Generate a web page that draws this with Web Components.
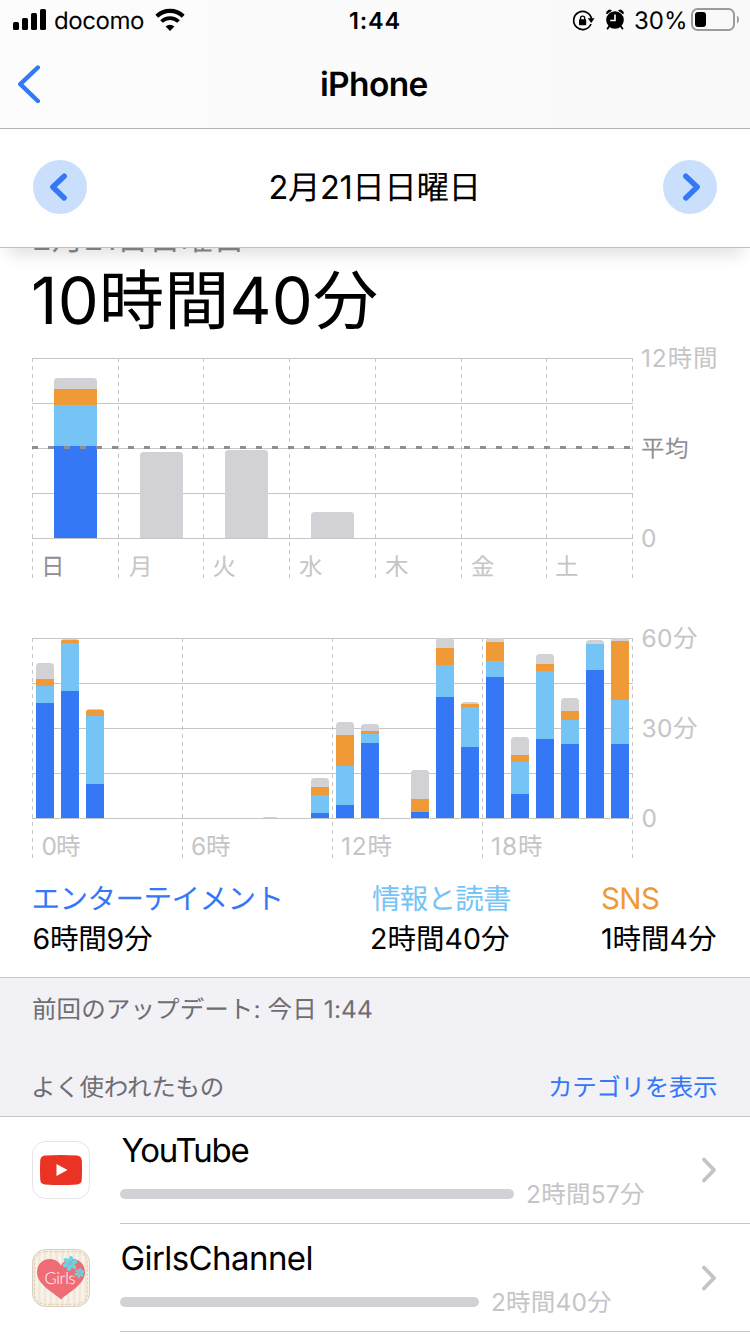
<!DOCTYPE html>
<html lang="ja">
<head>
<meta charset="utf-8">
<title>iPhone</title>
<style>
body {
  margin: 0;
  width: 750px;
  height: 1334px;
  overflow: hidden;
  background: #fff;
  color: #000;
  font-family: Inter, "Noto Sans CJK JP", sans-serif;
  text-rendering: geometricPrecision;
}
</style>
</head>
<body>
<screen-time></screen-time>

<script>
const FONT = 'Inter, "Noto Sans CJK JP", sans-serif';
const COLORS = { blue: '#3478f6', light: '#76c4f5', orange: '#f09a37', grey: '#d1d1d6' };
const ctx = document.createElement('canvas').getContext('2d');

// One line of text, tracked so that its glyphs span exactly `w` pixels
class FitText extends HTMLElement {
  constructor() {
    super();
    this.attachShadow({ mode: 'open' }).innerHTML = `
<style>
:host {
  display: block;
  flex: none;
  white-space: nowrap;
}
span {
  display: block;
}
</style>
<span><slot></slot></span>`;
  }

  connectedCallback() {
    const size = Number(this.getAttribute('size'));
    const weight = this.getAttribute('weight') || 400;
    const w = Number(this.getAttribute('w'));
    const text = this.textContent;
    ctx.font = `${weight} ${size}px ${FONT}`;
    const m = ctx.measureText(text);
    const ink = m.actualBoundingBoxLeft + m.actualBoundingBoxRight;
    this.style.width = w + 'px';
    this.style.height = '40px';
    const span = this.shadowRoot.querySelector('span');
    span.style.font = `${weight} ${size}px/40px ${FONT}`;
    span.style.marginLeft = m.actualBoundingBoxLeft + 'px';
    if (text.length > 1) {
      span.style.letterSpacing = (w - ink) / (text.length - 1) + 'px';
    }
  }
}
customElements.define('fit-text', FitText);


class StatusBar extends HTMLElement {
  constructor() {
    super();
    this.attachShadow({ mode: 'open' }).innerHTML = `
<style>
:host {
  display: grid;
  grid-template-columns: 350px 1fr auto;
  height: 41px;
  align-items: center;
}
.group {
  display: flex;
  align-items: center;
}
svg {
  display: block;
  flex: none;
}
.left {
  padding-left: 13px;
}
.left fit-text {
  margin: 0 11px 0 9px;
}
.right fit-text {
  margin: 0 6px 0 11px;
}
.right {
  padding-right: 10px;
}
</style>
<div class="group left">
  <svg width="33" height="41" viewBox="13 0 33 41">
    <rect x="13" y="22" width="6" height="8" rx="1.6"/>
    <rect x="22" y="18" width="6" height="12" rx="1.6"/>
    <rect x="31" y="13" width="6" height="17" rx="1.6"/>
    <rect x="40" y="9" width="6" height="21" rx="1.6"/>
  </svg>
  <fit-text size="24" w="89">docomo</fit-text>
  <svg width="30" height="41" viewBox="154.500 0 30 41" fill="none" stroke="#000">
    <path d="M156.300 16.200a19 19 0 0 1 26.400 0" stroke-width="4.100"/>
    <path d="M161 21.500a12.200 12.200 0 0 1 17 0" stroke-width="3.800"/>
    <path d="M169.500 31l-4.400-4.500a6.300 6.300 0 0 1 8.800 0z" fill="#000" stroke="none"/>
  </svg>
</div>
<fit-text size="23.500" weight="600" w="49.500">1:44</fit-text>
<div class="group right">
  <svg width="52" height="41" viewBox="572 0 52 41">
    <path d="M591.600 19.200a9 9 0 1 0-.6 4.800" fill="none" stroke="#000" stroke-width="1.700"/>
    <path d="M587.800 18.200h6.800l-3.400 4.800z"/>
    <rect x="579" y="19.300" width="7.200" height="5.900" rx=".8"/>
    <path d="M580.500 20v-1.800a2.100 2.100 0 0 1 4.200 0v1.800" fill="none" stroke="#000" stroke-width="1.300"/>
    <circle cx="615" cy="20" r="8.800"/>
    <path d="M606.800 13.800a3 3 0 0 1 4.600-3.200zM623.200 13.800a3 3 0 0 0-4.600-3.200z" stroke="#000" stroke-width="1" stroke-linejoin="round"/>
    <path d="M609.500 26l-2 2.600M620.500 26l2 2.600" stroke="#000" stroke-width="1.800" stroke-linecap="round"/>
    <path d="M615 14.500v6h-4.800" fill="none" stroke="#fff" stroke-width="1.600"/>
  </svg>
  <fit-text size="24" w="50">30%</fit-text>
  <svg width="49" height="41" viewBox="691 0 49 41">
    <rect x="692" y="9" width="42" height="21" rx="5.500" fill="none" stroke="#9b9b9c" stroke-width="2"/>
    <rect x="695" y="12" width="11" height="15" rx="3"/>
    <path d="M737 15.500c2.600 1.200 2.600 6.800 0 8z" fill="#9b9b9c"/>
  </svg>
</div>`;
  }
}
customElements.define('status-bar', StatusBar);


class NavBar extends HTMLElement {
  constructor() {
    super();
    this.attachShadow({ mode: 'open' }).innerHTML = `
<style>
:host {
  display: flex;
  height: 87px;
  align-items: center;
  border-bottom: 1px solid #b4b4b6;
}
svg {
  display: block;
  margin-right: 281px;
}
</style>
<svg width="40" height="87" viewBox="0 41 40 87">
  <path d="M37.800 67.500L20.300 84.200l17.500 16.800" fill="none" stroke="#3478f6" stroke-width="4.400" stroke-linecap="round" stroke-linejoin="round"/>
</svg>
<fit-text size="33.500" weight="600" w="106.500"></fit-text>`;
  }

  connectedCallback() {
    // fit-text measures its own text
    const title = this.shadowRoot.querySelector('fit-text');
    title.textContent = this.getAttribute('heading');
    title.connectedCallback();
  }
}
customElements.define('nav-bar', NavBar);


class RoundButton extends HTMLElement {
  constructor() {
    super();
    this.attachShadow({ mode: 'open' }).innerHTML = `
<style>
:host {
  display: block;
  width: 54px;
  height: 54px;
  border-radius: 50%;
  background: #cadffc;
}
:host([next]) svg {
  transform: scaleX(-1);
}
svg {
  display: block;
}
</style>
<svg width="54" height="54" viewBox="0 0 54 54">
  <path d="M31.200 16.200L19.800 27l11.400 11" fill="none" stroke="#3478f6" stroke-width="5.400" stroke-linecap="round" stroke-linejoin="round"/>
</svg>`;
  }
}
customElements.define('round-button', RoundButton);


class DateBar extends HTMLElement {
  constructor() {
    super();
    this.attachShadow({ mode: 'open' }).innerHTML = `
<style>
:host {
  display: flex;
  align-items: center;
  justify-content: space-between;
  box-sizing: border-box;
  height: 119px;
  padding: 0 33px 2px;
  background: #fefefe;
  border-bottom: 1px solid #bfbfc1;
}
fit-text {
  padding: 2px 3px 0 0;
}
</style>
<round-button></round-button>
<fit-text size="32.500" w="206">2月21日日曜日</fit-text>
<round-button next></round-button>`;
  }
}
customElements.define('date-bar', DateBar);


class BarChart extends HTMLElement {
  constructor() {
    super();
    this.attachShadow({ mode: 'open' });
  }

  // bars: x, bottom-up heights [blue, light, orange, grey]
  set data({ lines, bars, barWidth, average, xLabels, yLabels }) {
    const keys = ['blue', 'light', 'orange', 'grey'];
    let svg = '';
    for (let y = 0; y <= 180; y += 45) {
      svg += `<rect x="32" y="${y + 10}" width="601" height="1" fill="#c6c6c8"/>`;
    }
    for (const x of lines) {
      svg += `<path d="M${x + 0.5} 10V230" stroke="#c6c6c8" stroke-dasharray="4 4"/>`;
    }
    bars.forEach(([x, parts, width = barWidth], i) => {
      const total = parts.reduce((a, b) => a + b, 0);
      const r = Math.min(3.5, total);
      const top = 190 - total;
      svg += `<clipPath id="c${i}"><path d="M${x} 190V${top + r}q0-${r} ${r}-${r}h${width - 2 * r}q${r} 0 ${r} ${r}V190z"/></clipPath>`;
      svg += `<g clip-path="url(#c${i})">`;
      let y = 190;
      parts.forEach((h, k) => {
        y -= h;
        if (h) svg += `<rect x="${x}" y="${y}" width="${width}" height="${h}" fill="${COLORS[keys[k]]}"/>`;
      });
      svg += '</g>';
    });
    if (average) {
      svg += `<path d="M32 ${average}H632" stroke="#8e8e93" stroke-width="3" stroke-dasharray="6 10"/>`;
    }
    const label = ([text, x, w, dark], y) => {
      const size = /^[^0-9]+$/.test(text) ? 23.5 : 24.5;
      ctx.font = `${size}px ${FONT}`;
      const m = ctx.measureText(text);
      const gap = text.length > 1 ? (w - m.actualBoundingBoxLeft - m.actualBoundingBoxRight) / (text.length - 1) : 0;
      return `<text x="${x + m.actualBoundingBoxLeft}" y="${y + 9}" font-size="${size}" letter-spacing="${gap}" fill="${dark ? '#8e8e93' : '#c5c5c7'}">${text}</text>`;
    };
    for (const l of xLabels) svg += label(l, 218);
    for (const [y, ...l] of yLabels) svg += label(l, y);

    this.shadowRoot.innerHTML = `
<style>
:host {
  display: block;
  height: 240px;
}
svg {
  display: block;
  overflow: visible;
}
</style>
<svg width="750" height="240" viewBox="0 0 750 240">${svg}</svg>`;
  }
}
customElements.define('bar-chart', BarChart);


class CategoryTotal extends HTMLElement {
  constructor() {
    super();
    this.attachShadow({ mode: 'open' }).innerHTML = `
<style>
:host {
  display: block;
}
</style>
<slot name="label"></slot>
<slot></slot>`;
  }
}
customElements.define('category-total', CategoryTotal);


class AppRow extends HTMLElement {
  constructor() {
    super();
    this.attachShadow({ mode: 'open' }).innerHTML = `
<style>
:host {
  display: flex;
  height: 108px;
  padding-left: 32px;
  box-sizing: border-box;
}
.icon {
  width: 58px;
  height: 58px;
  margin: 25px 30px 0 0;
}
.body {
  flex: 1;
  display: grid;
  grid-template-columns: 1fr auto;
  border-bottom: 1px solid #c6c6c8;
  padding-right: 33px;
  align-items: center;
}
.name {
  padding: 14px 0 4px 1.5px;
}
.usage {
  display: flex;
  align-items: center;
  gap: 13px;
  padding-bottom: 9px;
}
.meter {
  height: 10px;
  border-radius: 5px;
  background: #d1d1d6;
}
.time {
  color: #c5c5c7;
}
svg {
  display: block;
}
</style>
<div class="icon"><slot name="icon"></slot></div>
<div class="body">
  <div>
    <div class="name"><slot name="name"></slot></div>
    <div class="usage">
      <div class="meter"></div>
      <div class="time"><slot name="time"></slot></div>
    </div>
  </div>
  <svg width="16" height="28" viewBox="0 0 16 28">
    <path d="M3 3.500L13 14 3 24.500" fill="none" stroke="#c4c4c6" stroke-width="3.800" stroke-linecap="round" stroke-linejoin="round"/>
  </svg>
</div>`;
  }

  connectedCallback() {
    this.shadowRoot.querySelector('.meter').style.width = this.getAttribute('meter') + 'px';
  }
}
customElements.define('app-row', AppRow);


const flower = (x, y, s) => `<g transform="translate(${x} ${y}) scale(${s})" fill="#68d5df">` +
  [0, 60, 120, 180, 240, 300].map(a => `<ellipse cy="-4.600" rx="2.100" ry="3" transform="rotate(${a + 10})"/>`).join('') +
  [0, 60, 120].map(a => `<path d="M0-4V4" stroke="#68d5df" stroke-width=".8" transform="rotate(${a + 10})"/>`).join('') +
  '</g>';

class ScreenTime extends HTMLElement {
  constructor() {
    super();
    this.attachShadow({ mode: 'open' }).innerHTML = `
<style>
:host {
  display: block;
}
header {
  position: relative;
  z-index: 1;
  background: linear-gradient(90deg, #fcfcfd, #f9f9fa);
  box-shadow: 0 14px 16px -8px rgba(0, 0, 0, .13);
}
.summary {
  display: flow-root;
  height: 100px;
  padding-left: 34px;
}
.summary .day {
  margin-top: -29px;
  color: #8a8a8e;
}
.summary .total {
  padding-top: 22px;
}
bar-chart + bar-chart {
  margin-top: 40px;
}
.totals {
  display: grid;
  grid-template-columns: 338.500px 230px 1fr;
  padding: 11px 0 18px 33.500px;
  border-bottom: 1px solid #c6c6c8;
}
.group {
  background: #f2f1f6;
  color: #6d6d72;
  height: 138px;
  border-bottom: 1px solid #c6c6c8;
}
.group + app-row {
  margin-top: -1px;
}
.updated {
  padding: 11px 0 38px 33px;
}
.heading {
  display: flex;
  justify-content: space-between;
  padding: 0 33px 0 34px;
}
svg {
  display: block;
}
</style>
<header>
  <status-bar></status-bar>
  <nav-bar heading="iPhone"></nav-bar>
  <date-bar></date-bar>
</header>

<div class="summary">
  <fit-text class="day" size="32" w="206">2月21日日曜日</fit-text>
  <fit-text class="total" size="65" w="343">10時間40分</fit-text>
</div>
<bar-chart id="week"></bar-chart>
<bar-chart id="day"></bar-chart>

<div class="totals">
  <category-total>
    <fit-text slot="label" size="28.500" w="247" style="color: #3478f6">エンターテイメント</fit-text>
    <fit-text size="28.500" w="118.500">6時間9分</fit-text>
  </category-total>
  <category-total>
    <fit-text slot="label" size="28.500" w="138" style="color: #76c4f5">情報と読書</fit-text>
    <fit-text size="28.500" w="137">2時間40分</fit-text>
  </category-total>
  <category-total>
    <fit-text slot="label" size="29.500" w="57" style="color: #f09a37">SNS</fit-text>
    <fit-text size="28.500" w="114">1時間4分</fit-text>
  </category-total>
</div>

<div class="group">
  <fit-text class="updated" size="24.500" w="339">前回のアップデート: 今日 1:44</fit-text>
  <div class="heading">
    <fit-text size="24.500" w="190">よく使われたもの</fit-text>
    <fit-text size="24.500" w="167" style="color: #3478f6">カテゴリを表示</fit-text>
  </div>
</div>

<app-row meter="394">
  <svg slot="icon" width="58" height="58" viewBox="0 0 58 58">
    <rect x=".5" y=".5" width="57" height="57" rx="13" fill="#fff" stroke="#e3e3e5"/>
    <path d="M13 14.600q16-1 32 0q4.500.3 4.800 5q.5 9.400 0 18.800q-.3 4.700-4.800 5q-16 1-32 0q-4.500-.3-4.800-5q-.5-9.400 0-18.800q.3-4.700 4.800-5z" fill="#ea3323"/>
    <path d="M24.500 23v12l11-6z" fill="#fff"/>
  </svg>
  <fit-text slot="name" size="33" w="127">YouTube</fit-text>
  <fit-text slot="time" size="24.500" w="117">2時間57分</fit-text>
</app-row>
<app-row meter="359">
  <svg slot="icon" width="58" height="58" viewBox="0 0 58 58">
    <defs>
      <pattern id="stripes" width="5.800" height="58" patternUnits="userSpaceOnUse">
        <rect width="5.800" height="58" fill="#f8f4ea"/>
        <rect width="3" height="58" fill="#f0e8dc"/>
      </pattern>
    </defs>
    <rect x=".5" y=".5" width="57" height="57" rx="13" fill="url(#stripes)" stroke="#d3cfc9"/>
    <rect x="2.600" y="2.600" width="52.800" height="52.800" rx="11" fill="none" stroke="#ecd2a4" stroke-width="1.200" stroke-dasharray="2.600 1.600"/>
    <path d="M29 50.500C24 45 5 36 5 23.500C5 8.500 23 6 29 16.500C35 6 53 8.500 53 23.500C53 36 34 45 29 50.500z" fill="#ef6c76"/>
    <text x="12.500" y="35" font-family="Lato, sans-serif" font-size="16.500" font-weight="300" textLength="31" fill="#fff">Girls</text>
    ${flower(38, 14.500, 1)}
    ${flower(47.500, 24, 0.680)}
  </svg>
  <fit-text slot="name" size="33" w="190">GirlsChannel</fit-text>
  <fit-text slot="time" size="24.500" w="119">2時間40分</fit-text>
</app-row>`;

    this.shadowRoot.getElementById('week').data = {
      lines: [32, 118, 203, 289, 375, 461, 546, 632],
      barWidth: 43,
      average: 99.5,
      bars: [
        [54, [92, 41, 16, 11]],
        [140, [0, 0, 0, 86]],
        [225, [0, 0, 0, 88]],
        [311, [0, 0, 0, 26]],
      ],
      xLabels: [
        ['日', 45, 0, true], ['月', 129, 0], ['火', 213.500, 0], ['水', 299, 0],
        ['木', 385, 0], ['金', 471, 0], ['土', 556, 0],
      ],
      yLabels: [[10, '12時間', 642, 74], [100, '平均', 642, 46, true], [190, '0', 642, 14]],
    };

    this.shadowRoot.getElementById('day').data = {
      lines: [32, 182, 332, 482, 632],
      barWidth: 18,
      bars: [
        [36, [115, 17, 7, 16]],
        [61, [127, 48, 3, 1.3]],
        [86, [34, 68, 6, 1]],
        [263, [0, 0, 0, 1], 14],
        [311, [5, 18, 8, 9]],
        [336, [13, 39, 31, 13]],
        [361, [75, 9, 3, 7]],
        [411, [6, 0, 13, 29]],
        [436, [121, 32, 17, 10]],
        [461, [71, 40, 3, 2]],
        [486, [141, 16, 19, 4]],
        [511, [24, 32, 7, 18]],
        [536, [79, 68, 7, 10]],
        [561, [74, 24, 9, 13]],
        [586, [148, 26, 0, 4]],
        [611, [74, 44, 59, 3]],
      ],
      xLabels: [['0時', 42.500, 37.500], ['6時', 192, 38], ['12時', 342, 49.500], ['18時', 492, 50]],
      yLabels: [[10, '60分', 642.500, 54.500], [100, '30分', 642.500, 54.500], [190, '0', 642.500, 14]],
    };
  }
}
customElements.define('screen-time', ScreenTime);
</script>
</body>
</html>
